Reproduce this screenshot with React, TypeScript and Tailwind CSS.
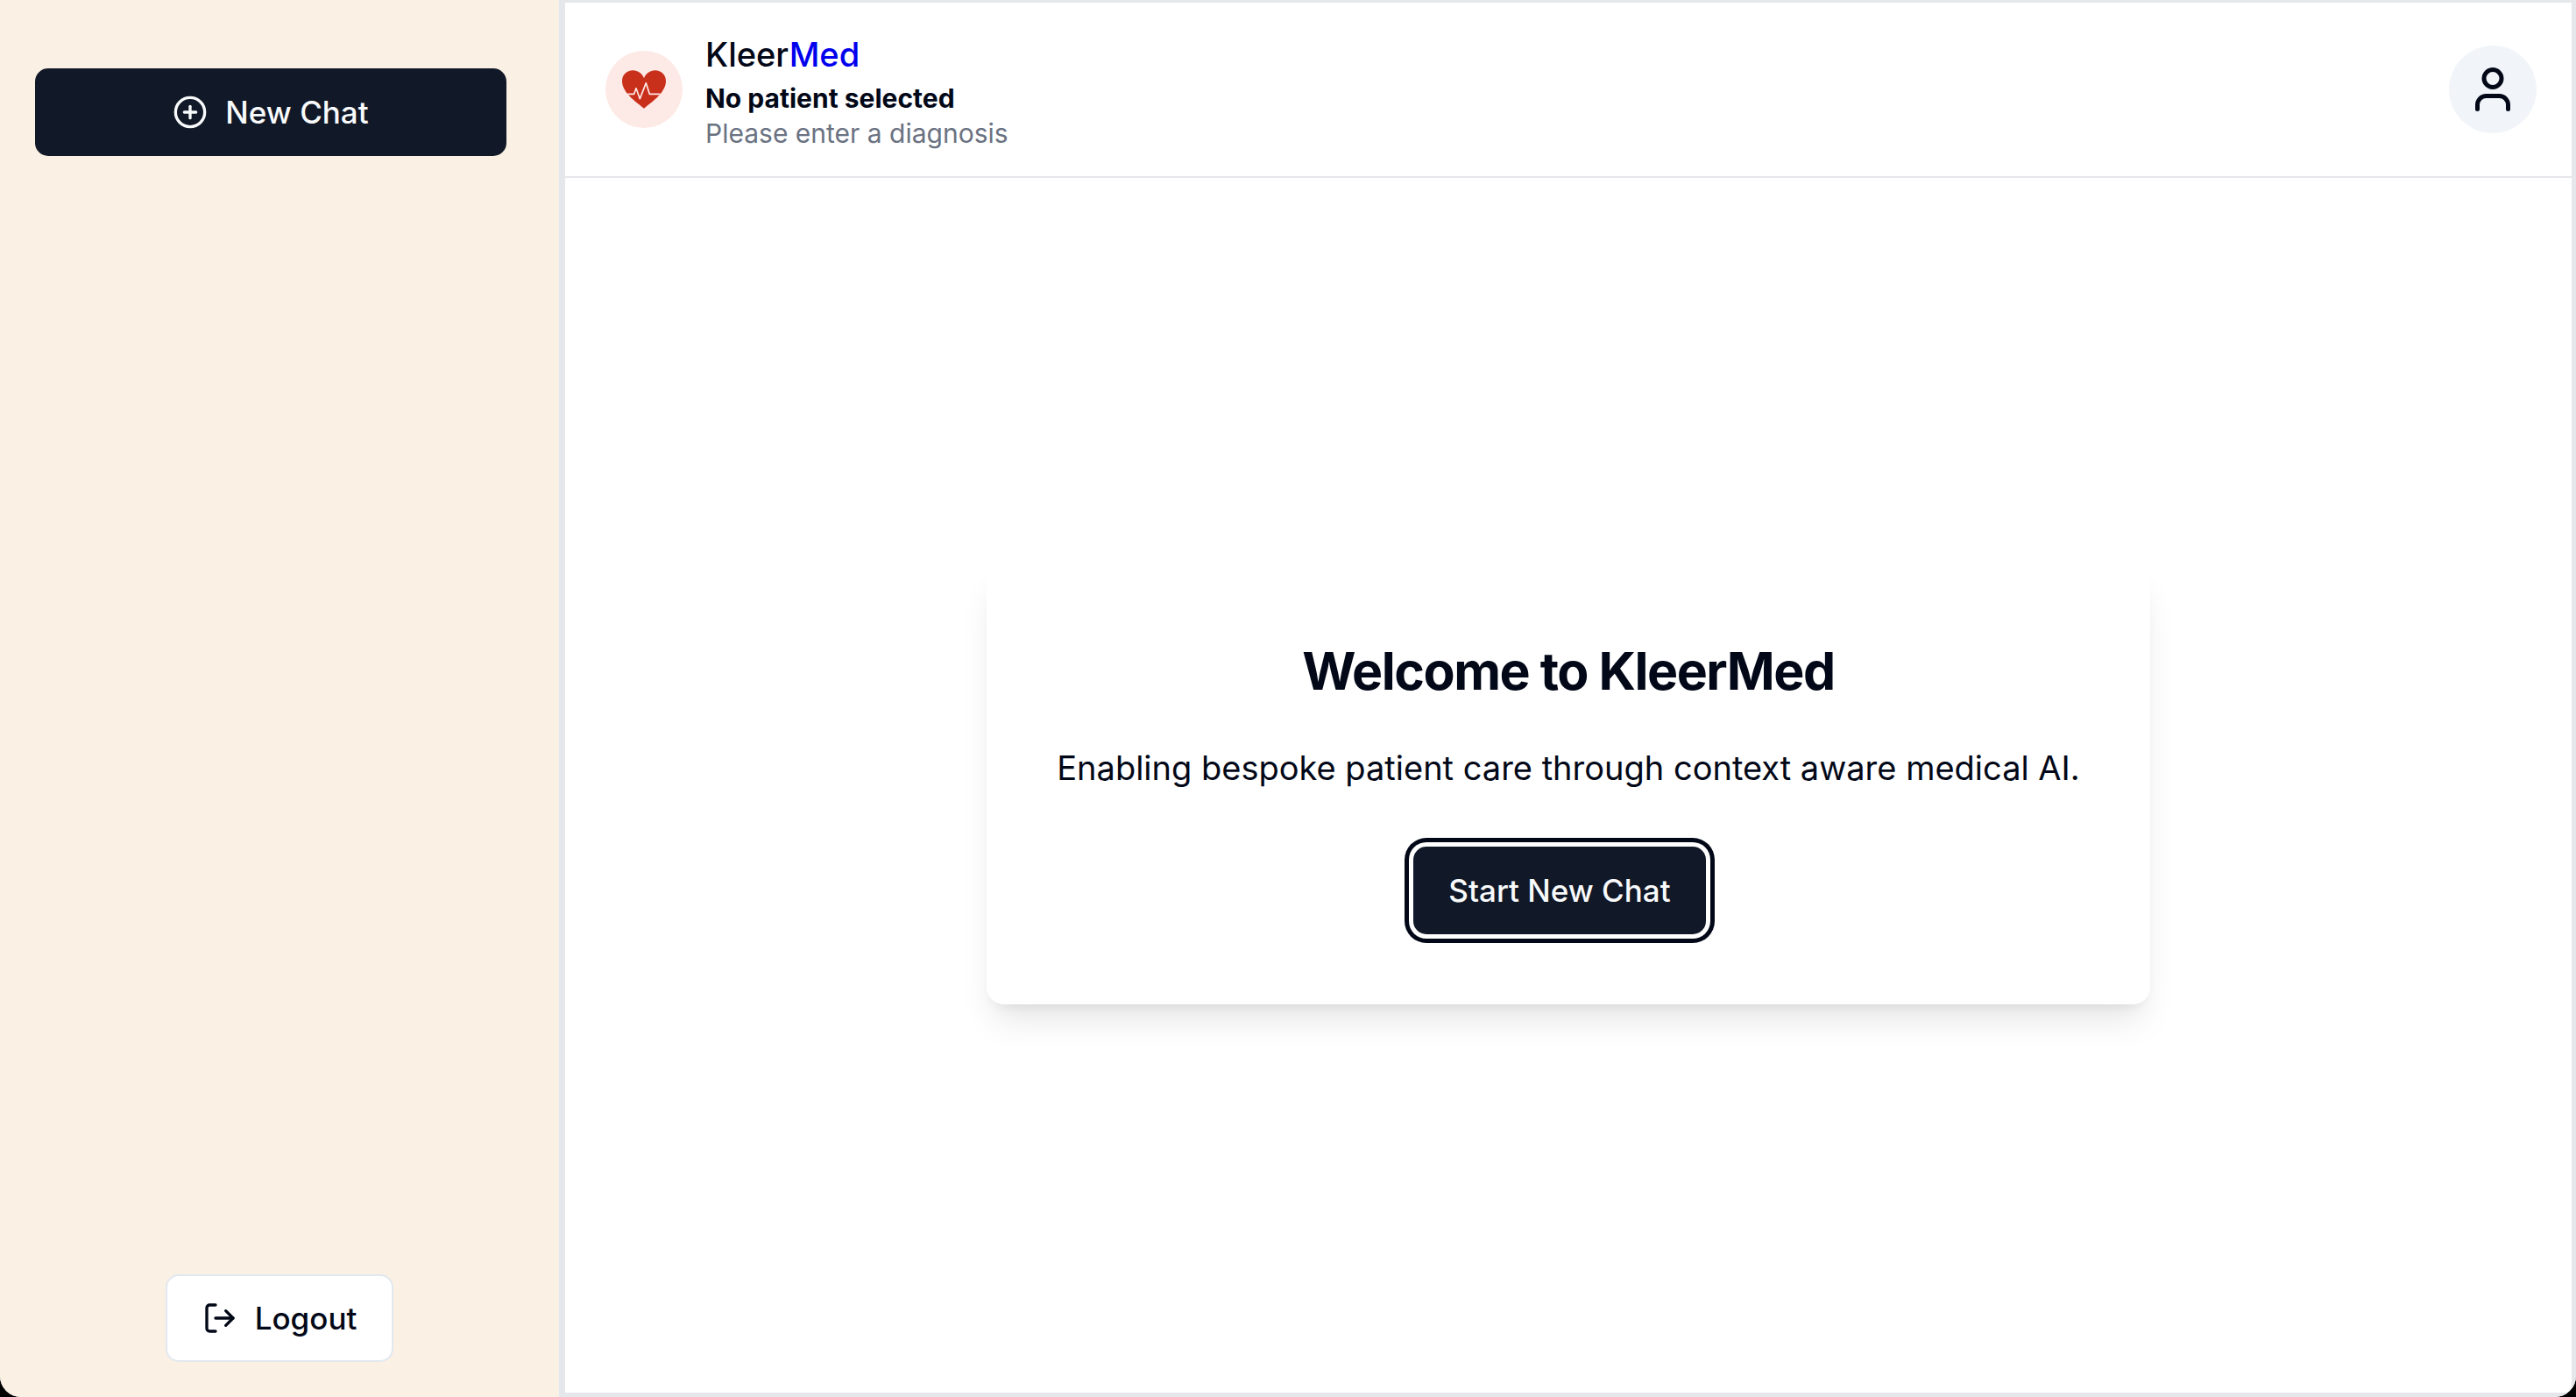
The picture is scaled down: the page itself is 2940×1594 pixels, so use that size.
import { CirclePlus, LogOut, User } from "lucide-react";

function HeartPulseLogo() {
  return (
    <svg viewBox="90 125 150 132" className="h-[44px] w-[50px]" aria-hidden="true">
      <path
        d="M165 256C147 240 90 204 90 163C90 141 106 126 127 126C144 126 159 137 165 153C171 137 186 126 203 126C224 126 240 141 240 163C240 204 183 240 165 256Z"
        fill="#c9301c"
      />
      <path
        d="M109 207H131L138 187L151 223L172 169L184 207H220"
        fill="none"
        stroke="#fdeae6"
        strokeWidth="5"
        strokeLinejoin="round"
      />
    </svg>
  );
}

function Sidebar() {
  return (
    <aside className="flex w-[640px] shrink-0 flex-col justify-between border-r-2 border-slate-200 bg-[#faf0e4] pt-[78px] pr-[60px] pb-[40px] pl-[40px]">
      <button
        type="button"
        className="flex h-[100px] w-full items-center justify-center gap-[20px] rounded-[15px] bg-[#111827] text-[35px] leading-[50px] font-medium text-slate-50"
      >
        <CirclePlus size={40} aria-hidden="true" />
        New Chat
      </button>
      <div className="-mr-[20px] flex justify-center">
        <button
          type="button"
          className="flex h-[100px] items-center gap-[20px] rounded-[15px] border-2 border-slate-200 bg-white px-[40px] text-[35px] leading-[50px] font-medium"
        >
          <LogOut size={40} aria-hidden="true" />
          Logout
        </button>
      </div>
    </aside>
  );
}

function Header() {
  return (
    <header className="flex h-[200px] shrink-0 items-center justify-between border-b-2 border-gray-200 pr-[40px] pl-[46px]">
      <div className="flex items-center gap-[26px]">
        <div className="flex size-[88px] items-center justify-center rounded-full bg-[#fdeae6]">
          <HeartPulseLogo />
        </div>
        <div>
          <h1 className="text-[38px] leading-[60px] font-medium">
            Kleer<span className="text-[#0000ee]">Med</span>
          </h1>
          <p className="text-[30px] leading-[40px] font-bold">No patient selected</p>
          <p className="text-[30px] leading-[40px] text-gray-500">Please enter a diagnosis</p>
        </div>
      </div>
      <button
        type="button"
        aria-label="Account"
        className="flex size-[100px] items-center justify-center rounded-full bg-slate-100"
      >
        <User size={60} aria-hidden="true" />
      </button>
    </header>
  );
}

function WelcomeCard() {
  return (
    <section className="flex flex-col items-center rounded-[20px] bg-white p-[80px] shadow-[0_25px_38px_-8px_rgb(0_0_0/0.1),0_10px_15px_-10px_rgb(0_0_0/0.1)]">
      <h2 className="text-[59px] leading-[80px] font-bold tracking-tight">Welcome to KleerMed</h2>
      <p className="mt-[40px] text-[38px] leading-[60px]">
        Enabling bespoke patient care through context aware medical AI.
      </p>
      <button
        type="button"
        className="mt-[60px] mr-[20px] h-[100px] rounded-[15px] bg-[#111827] px-[40px] text-[35px] leading-[50px] font-medium text-slate-50 ring-5 ring-[#020817] ring-offset-5 ring-offset-white"
      >
        Start New Chat
      </button>
    </section>
  );
}

export default function App() {
  return (
    <div className="h-screen bg-black font-['Inter',sans-serif] text-[#020817]">
      <div className="flex h-full overflow-hidden rounded-b-[24px] bg-white">
        <Sidebar />
        <main className="flex min-w-0 flex-1 flex-col border-5 border-t-3 border-gray-200">
          <Header />
          <div className="flex flex-1 items-center justify-center">
            <WelcomeCard />
          </div>
        </main>
      </div>
    </div>
  );
}
